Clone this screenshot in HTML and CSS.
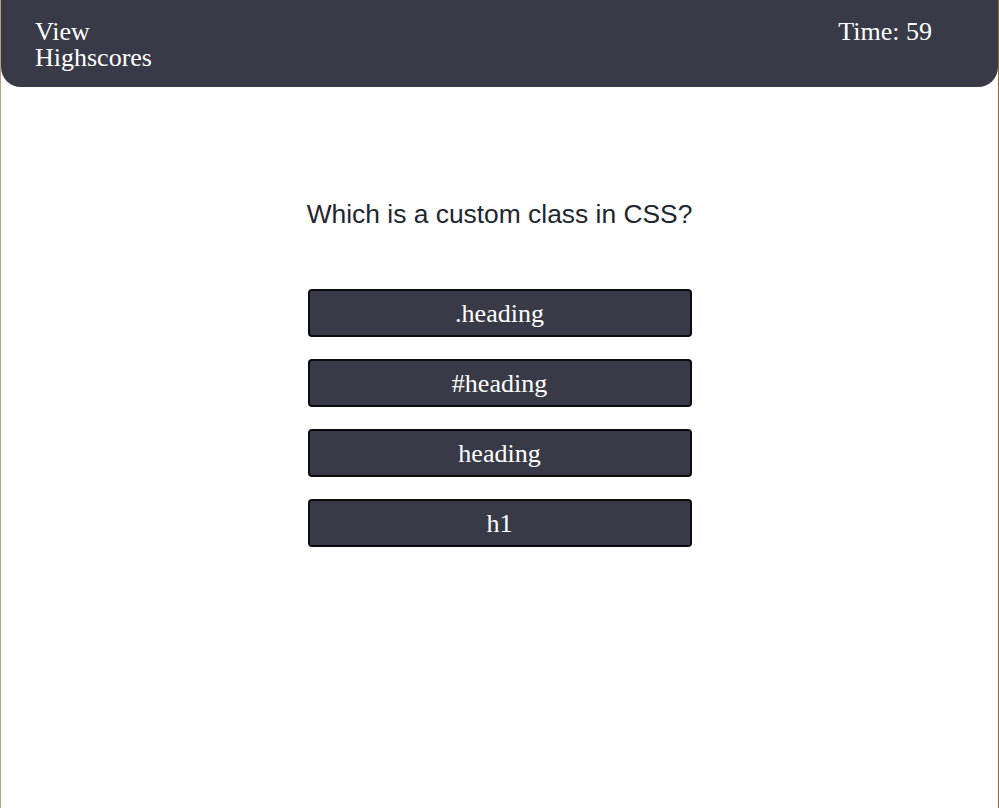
FILE: index.html
```html
<!DOCTYPE html>
<html>
<head>
<meta charset="utf-8">
<link rel="stylesheet" href="styles.css">
</head>
<body>
<header class="top">
  <div class="highscores">View Highscores</div>
  <div class="timer">Time: 59</div>
</header>
<main class="quiz">
  <h2 class="question">Which is a custom class in CSS?</h2>
  <div class="choices">
    <button class="choice">.heading</button>
    <button class="choice">#heading</button>
    <button class="choice">heading</button>
    <button class="choice">h1</button>
  </div>
</main>
</body>
</html>
```
FILE: styles.css
```css
html, body {
  margin: 0;
  padding: 0;
  background: #ffffff;
}
body {
  font-family: "Liberation Serif", "Times New Roman", serif;
  border-left: 1px solid #b9a57c;
  border-right: 1px solid #8a6a3c;
  min-height: 808px;
  box-sizing: border-box;
}
.top {
  display: flex;
  justify-content: space-between;
  align-items: flex-start;
  background: #383b47;
  color: #ffffff;
  height: 87px;
  box-sizing: border-box;
  padding: 19px 66px 0 34px;
  border-radius: 0 0 20px 20px;
  font-size: 26px;
  line-height: 26px;
}
.highscores {
  width: 135px;
}
.quiz {
  display: flex;
  flex-direction: column;
  align-items: center;
  padding-top: 112px;
}
.question {
  margin: 0;
  font-family: "Liberation Sans", Arial, sans-serif;
  font-weight: normal;
  font-size: 26.4px;
  line-height: 30px;
  color: #222630;
}
.choices {
  display: flex;
  flex-direction: column;
  gap: 22px;
  margin-top: 60px;
}
.choice {
  width: 384px;
  height: 48px;
  background: #383b47;
  color: #ffffff;
  border: 2px solid #0c0c10;
  border-radius: 4px;
  font-family: "Liberation Serif", "Times New Roman", serif;
  font-size: 26px;
  padding: 2px 0 0;
  line-height: 40px;
}
```
